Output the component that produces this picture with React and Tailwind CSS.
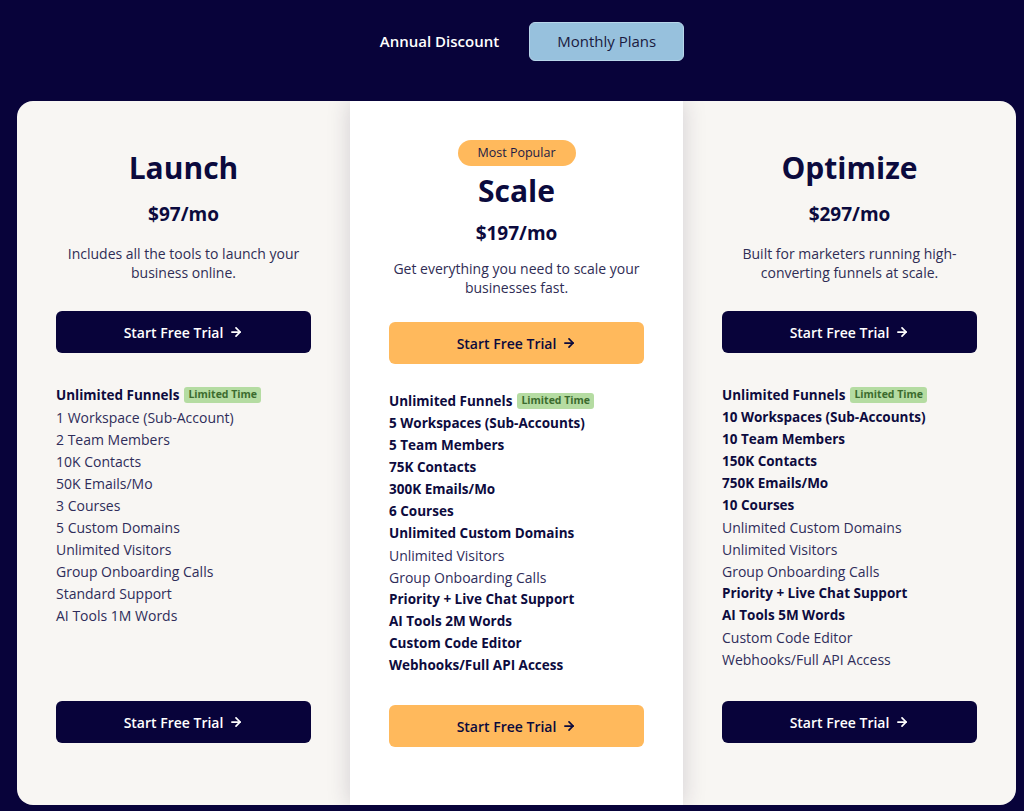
import React from 'react';
import { ArrowRight } from 'lucide-react';

const font = { fontFamily: '"Open Sans", "Liberation Sans", sans-serif' };

const plans = [
  {
    name: 'Launch',
    price: '$97/mo',
    desc: ['Includes all the tools to launch your', 'business online.'],
    features: [
      ['Unlimited Funnels', true, true],
      ['1 Workspace (Sub-Account)'],
      ['2 Team Members'],
      ['10K Contacts'],
      ['50K Emails/Mo'],
      ['3 Courses'],
      ['5 Custom Domains'],
      ['Unlimited Visitors'],
      ['Group Onboarding Calls'],
      ['Standard Support'],
      ['AI Tools 1M Words'],
    ],
  },
  {
    name: 'Scale',
    price: '$197/mo',
    popular: true,
    desc: ['Get everything you need to scale your', 'businesses fast.'],
    features: [
      ['Unlimited Funnels', true, true],
      ['5 Workspaces (Sub-Accounts)', true],
      ['5 Team Members', true],
      ['75K Contacts', true],
      ['300K Emails/Mo', true],
      ['6 Courses', true],
      ['Unlimited Custom Domains', true],
      ['Unlimited Visitors'],
      ['Group Onboarding Calls'],
      ['Priority + Live Chat Support', true],
      ['AI Tools 2M Words', true],
      ['Custom Code Editor', true],
      ['Webhooks/Full API Access', true],
    ],
  },
  {
    name: 'Optimize',
    price: '$297/mo',
    desc: ['Built for marketers running high-', 'converting funnels at scale.'],
    features: [
      ['Unlimited Funnels', true, true],
      ['10 Workspaces (Sub-Accounts)', true],
      ['10 Team Members', true],
      ['150K Contacts', true],
      ['750K Emails/Mo', true],
      ['10 Courses', true],
      ['Unlimited Custom Domains'],
      ['Unlimited Visitors'],
      ['Group Onboarding Calls'],
      ['Priority + Live Chat Support', true],
      ['AI Tools 5M Words', true],
      ['Custom Code Editor'],
      ['Webhooks/Full API Access'],
    ],
  },
];

const TrialButton = ({ popular }) => (
  <button
    className={`w-full h-[42px] rounded-md flex items-center justify-center gap-1.5 text-[14px] font-semibold ${
      popular ? 'bg-[#ffb95c] text-[#0b0a3d]' : 'bg-[#08033a] text-white'
    }`}
  >
    Start Free Trial <ArrowRight size={14} strokeWidth={3} />
  </button>
);

const PlanCard = ({ plan }) => {
  const p = plan.popular;
  return (
    <div
      className={`flex-1 flex flex-col px-[39px] ${
        p
          ? 'bg-white relative z-10 shadow-[0_0_22px_rgba(40,30,60,0.18)] pt-[39px] pb-[58px]'
          : 'bg-[#f8f6f3] pt-[49px] pb-[62px]'
      }`}
    >
      {p && (
        <div className="self-center h-[26px] px-[20px] rounded-full bg-[#ffb95c] text-[#1c1a45] text-[12.5px] font-medium flex items-center mb-[7px]">
          Most Popular
        </div>
      )}
      <h2 className="text-center text-[30px] leading-[36px] font-bold text-[#0b0a3d]">{plan.name}</h2>
      <div className={`text-center text-[19px] leading-[26px] font-bold text-[#0b0a3d] ${p ? 'mt-[11px]' : 'mt-[15px]'}`}>
        {plan.price}
      </div>
      <p className={`text-center text-[14px] leading-[19px] font-medium text-[#2f2d55] ${p ? 'mt-[13px]' : 'mt-[17px]'}`}>
        {plan.desc[0]}
        <br />
        {plan.desc[1]}
      </p>
      <div className={p ? 'mt-[25px]' : 'mt-[29px]'}>
        <TrialButton popular={p} />
      </div>
      <ul className={`flex-1 ${p ? 'mt-[26px]' : 'mt-[31px]'}`}>
        {plan.features.map(([text, bold, limited]) => (
          <li
            key={text}
            className={`flex items-center h-[22px] ${
              bold ? 'text-[13.5px] font-bold text-[#0d0b3e]' : 'text-[14px] font-medium text-[#2f2d5a]'
            }`}
          >
            {text}
            {limited && (
              <span className="ml-[5px] h-[16px] px-[4px] rounded-[3px] bg-[#b5dca2] text-[#3c6b2e] text-[10.5px] font-bold flex items-center">
                Limited Time
              </span>
            )}
          </li>
        ))}
      </ul>
      <TrialButton popular={p} />
    </div>
  );
};

export default function App() {
  return (
    <div className="min-h-[811px] bg-[#08033a] pt-[22px] pb-[6px]" style={font}>
      <div className="flex justify-center items-center gap-[6px] pl-[16px]">
        <button className="h-[39px] px-[24px] text-[15px] font-semibold text-white">Annual Discount</button>
        <button className="h-[39px] w-[155px] rounded-md bg-[#97c1dd] text-[15px] font-medium text-[#1a1a40] border border-[#b8d6ea]">
          Monthly Plans
        </button>
      </div>
      <div className="mt-[40px] ml-[17px] mr-[8px] flex h-[704px] rounded-2xl overflow-hidden">
        {plans.map((plan) => (
          <PlanCard key={plan.name} plan={plan} />
        ))}
      </div>
    </div>
  );
}
